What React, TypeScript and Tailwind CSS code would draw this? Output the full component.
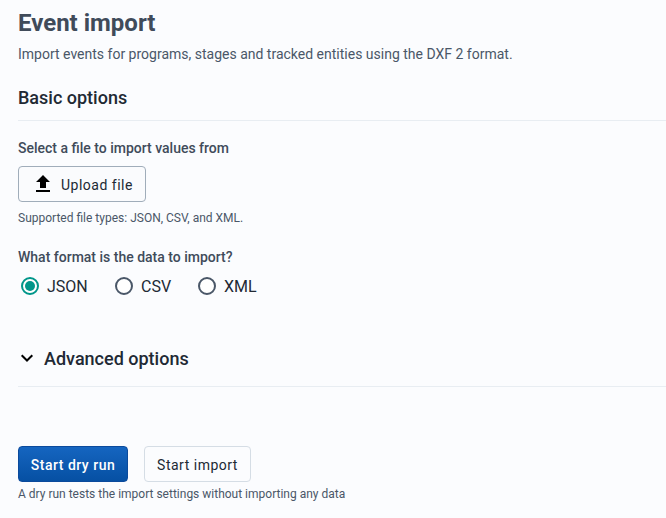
import React from "react";

function Radio({ label, checked }: { label: string; checked?: boolean }) {
  return (
    <label className="flex h-6 items-center">
      <svg width="24" height="24" viewBox="0 0 24 24">
        <circle cx="12" cy="12" r="8" strokeWidth="2" className={checked ? "fill-white stroke-[#00968a]" : "fill-white stroke-[#4a5768]"} />
        {checked && <circle cx="12" cy="12" r="5" className="fill-[#00968a]" />}
      </svg>
      <span className="ml-[5px] pt-px text-base leading-6 text-[#212934]">{label}</span>
    </label>
  );
}

export default function App() {
  return (
    <main className="h-[518px] overflow-hidden bg-[#fbfcfe] pl-[18px] pt-2 font-['Roboto',sans-serif] text-[#212934]">
      <h1 className="text-2xl leading-[30px] font-bold text-[#404b5a]">Event import</h1>
      <p className="mt-[6px] text-sm leading-5 text-[#4a5768]">Import events for programs, stages and tracked entities using the DXF 2 format.</p>
      <section>
        <h2 className="mt-[22px] text-lg leading-6 font-medium">Basic options</h2>
        <hr className="mt-[10px] border-[#e8edf2]" />
        <p className="mt-[17px] text-sm leading-5 font-medium text-[#404b5a]">Select a file to import values from</p>
        <button className="mt-2 flex h-9 w-32 items-center rounded border border-[#a0adba] bg-[#fafbfd] pt-px pl-3 text-sm tracking-[0.5px]">
          <svg className="mr-[6px] fill-black" width="24" height="24" viewBox="0 0 24 24">
            <path d="M9 15h6V9h4l-7-7-7 7h4zm-4 2h14v2H5z" />
          </svg>
          <span className="pt-px">Upload file</span>
        </button>
        <p className="mt-2 text-xs leading-4 text-[#4a5768]">Supported file types: JSON, CSV, and XML.</p>
        <p className="mt-[21px] text-sm leading-5 font-medium text-[#404b5a]">What format is the data to import?</p>
        <div className="mt-[7px] flex">
          <div className="w-[94px]"><Radio label="JSON" checked /></div>
          <div className="w-[83px]"><Radio label="CSV" /></div>
          <Radio label="XML" />
        </div>
      </section>
      <section className="mt-[49px]">
        <h2 className="flex items-center text-lg leading-6 font-medium">
          <svg className="mr-2" width="18" height="18" viewBox="0 0 18 18" fill="none" stroke="black" strokeWidth="2">
            <path d="M3.7 5.2l5.3 5.3 5.3-5.3" />
          </svg>
          Advanced options
        </h2>
        <hr className="mt-[15px] border-[#e8edf2]" />
      </section>
      <div className="mt-[59px] flex gap-4">
        <button className="h-9 w-[110px] rounded border border-[#0b4a9c] bg-linear-to-b from-[#1565c0] to-[#0650a3] pt-0.5 text-sm font-medium tracking-[0.5px] text-white">Start dry run</button>
        <button className="h-9 w-[107px] rounded border border-[#d5dde5] bg-[#fbfcfe] pt-0.5 text-sm tracking-[0.5px]">Start import</button>
      </div>
      <p className="mt-1 text-xs leading-4 text-[#4a5768]">A dry run tests the import settings without importing any data</p>
    </main>
  );
}
